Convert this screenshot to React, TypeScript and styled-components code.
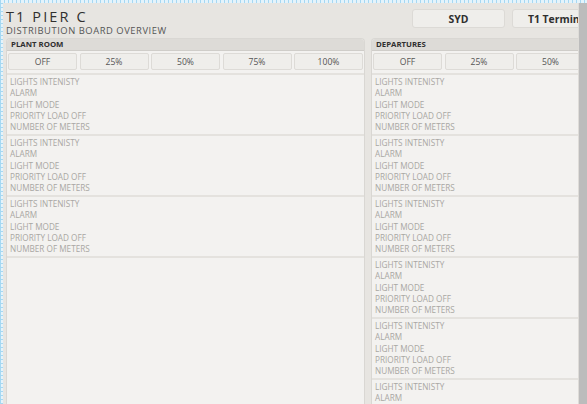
import React from "react";
import styled, { createGlobalStyle } from "styled-components";

const Global = createGlobalStyle`
  html, body { margin: 0; padding: 0; height: 100%; overflow: hidden; }
  body {
    font-family: "Open Sans", "Noto Sans", sans-serif;
    background-color: #e4f3fb;
    background-image:
      repeating-linear-gradient(0deg, #a6d8f2 0 1px, transparent 1px 4px),
      repeating-linear-gradient(90deg, #a6d8f2 0 1px, transparent 1px 4px);
  }
  #root { height: 100%; }
`;

const Frame = styled.div`
  display: flex;
  height: 401px;
  margin: 3px 0 0 3px;
  background: #e7e5e1;
`;

const Content = styled.div`
  flex: 1;
  min-width: 0;
  overflow: hidden;
  display: flex;
  flex-direction: column;
  padding: 0 0 0 3px;
`;

const Scrollbar = styled.div`
  width: 8px;
  flex: none;
  background: #bcbcbc;
  border-left: 1px solid #dedcd8;
`;

const TopBar = styled.div`
  display: flex;
  align-items: flex-start;
  height: 35px;
`;

const TitleBlock = styled.div`
  flex: 1;
  padding-top: 5px;
`;

const Title = styled.div`
  font-size: 14.5px;
  letter-spacing: 2.1px;
  color: #2f2f2f;
  line-height: 17px;
`;

const Subtitle = styled.div`
  font-size: 9.4px;
  letter-spacing: 0.55px;
  color: #555;
  line-height: 12px;
`;

const NavButtons = styled.div`
  display: flex;
  gap: 7px;
  padding-top: 6px;
  flex: none;
  width: 166px;
`;

const NavButton = styled.div`
  flex: none;
  width: 93px;
  height: 19px;
  box-sizing: border-box;
  border: 1px solid #dcdad6;
  border-radius: 3px;
  background: #efeeeb;
  font-size: 10.4px;
  font-weight: 700;
  color: #2f2f2f;
  display: flex;
  align-items: center;
  justify-content: center;
  white-space: nowrap;
`;

const Panels = styled.div`
  display: flex;
  gap: 6px;
  flex: 1;
  min-height: 0;
`;

const Panel = styled.div`
  flex: none;
  width: 359px;
  background: #f3f2f0;
  border: 1px solid #d9d7d3;
  border-bottom: none;
  border-radius: 4px 4px 0 0;
  box-sizing: border-box;
  display: flex;
  flex-direction: column;
  overflow: hidden;
`;

const PanelHeader = styled.div`
  height: 11px;
  background: #dddbd7;
  font-size: 7.8px;
  font-weight: 700;
  color: #2f2f2f;
  padding-left: 4px;
  line-height: 11px;
  border-bottom: 1px solid #cfcdc9;
`;

const ButtonRow = styled.div`
  display: flex;
  gap: 2.5px;
  padding: 2px 1px 3px;
  border-bottom: 2px solid #e4e2de;
`;

const LevelButton = styled.div`
  flex: none;
  width: 69px;
  height: 17px;
  box-sizing: border-box;
  border: 1px solid #dddbd7;
  border-radius: 2px;
  background: #efeeeb;
  font-size: 8.6px;
  color: #555;
  display: flex;
  align-items: center;
  justify-content: center;
`;

const Group = styled.div`
  padding: 1px 0 1.5px 3px;
  border-bottom: 2px solid #e4e2de;
`;

const Label = styled.div`
  font-size: 8.2px;
  line-height: 11.3px;
  color: #a9a7a3;
  white-space: nowrap;
`;

const labels = [
  "LIGHTS INTENISTY",
  "ALARM",
  "LIGHT MODE",
  "PRIORITY LOAD OFF",
  "NUMBER OF METERS",
];

const levels = ["OFF", "25%", "50%", "75%", "100%"];

function Board({ name, groups }: { name: string; groups: number }) {
  return (
    <Panel>
      <PanelHeader>{name}</PanelHeader>
      <ButtonRow>
        {levels.map((l) => (
          <LevelButton key={l}>{l}</LevelButton>
        ))}
      </ButtonRow>
      {Array.from({ length: groups }).map((_, i) => (
        <Group key={i}>
          {labels.map((t) => (
            <Label key={t}>{t}</Label>
          ))}
        </Group>
      ))}
    </Panel>
  );
}

export default function App() {
  return (
    <>
      <Global />
      <Frame>
        <Content>
          <TopBar>
            <TitleBlock>
              <Title>T1 PIER C</Title>
              <Subtitle>DISTRIBUTION BOARD OVERVIEW</Subtitle>
            </TitleBlock>
            <NavButtons>
              <NavButton>SYD</NavButton>
              <NavButton>T1 Terminal</NavButton>
            </NavButtons>
          </TopBar>
          <Panels>
            <Board name="PLANT ROOM" groups={3} />
            <Board name="DEPARTURES" groups={6} />
          </Panels>
        </Content>
        <Scrollbar />
      </Frame>
    </>
  );
}
